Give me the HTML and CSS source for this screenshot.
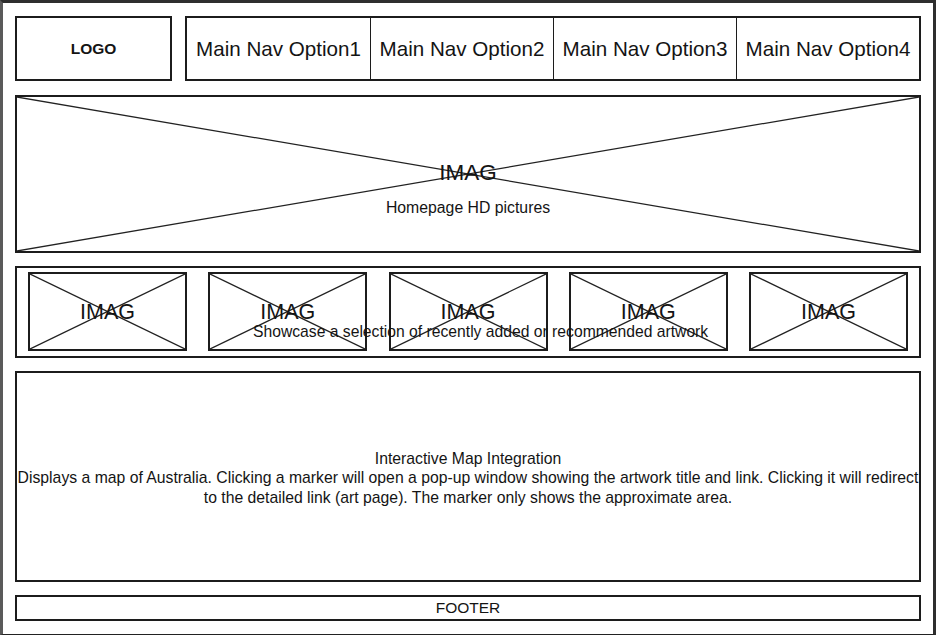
FILE: index.html
```html
<!DOCTYPE html>
<html lang="en">
<head>
<meta charset="utf-8">
<title>Wireframe</title>
<link rel="stylesheet" href="styles.css">
</head>
<body>
<div class="frame">
  <header class="header">
    <div class="logo">LOGO</div>
    <nav class="nav">
      <div class="nav-item">Main Nav Option1</div>
      <div class="nav-item">Main Nav Option2</div>
      <div class="nav-item">Main Nav Option3</div>
      <div class="nav-item">Main Nav Option4</div>
    </nav>
  </header>

  <section class="hero">
    <svg class="cross" viewBox="0 0 100 100" preserveAspectRatio="none"><line x1="0" y1="0" x2="100" y2="100"/><line x1="100" y1="0" x2="0" y2="100"/></svg>
    <div class="hero-text">
      <div class="imag">IMAG</div>
      <div class="caption">Homepage HD pictures</div>
    </div>
  </section>

  <section class="strip">
    <div class="thumb"><svg class="cross" viewBox="0 0 100 100" preserveAspectRatio="none"><line x1="0" y1="0" x2="100" y2="100"/><line x1="100" y1="0" x2="0" y2="100"/></svg><span class="imag small">IMAG</span></div>
    <div class="thumb"><svg class="cross" viewBox="0 0 100 100" preserveAspectRatio="none"><line x1="0" y1="0" x2="100" y2="100"/><line x1="100" y1="0" x2="0" y2="100"/></svg><span class="imag small">IMAG</span></div>
    <div class="thumb"><svg class="cross" viewBox="0 0 100 100" preserveAspectRatio="none"><line x1="0" y1="0" x2="100" y2="100"/><line x1="100" y1="0" x2="0" y2="100"/></svg><span class="imag small">IMAG</span></div>
    <div class="thumb"><svg class="cross" viewBox="0 0 100 100" preserveAspectRatio="none"><line x1="0" y1="0" x2="100" y2="100"/><line x1="100" y1="0" x2="0" y2="100"/></svg><span class="imag small">IMAG</span></div>
    <div class="thumb"><svg class="cross" viewBox="0 0 100 100" preserveAspectRatio="none"><line x1="0" y1="0" x2="100" y2="100"/><line x1="100" y1="0" x2="0" y2="100"/></svg><span class="imag small">IMAG</span></div>
    <div class="strip-label">Showcase a selection of recently added or recommended artwork</div>
  </section>

  <section class="map">
    <div class="map-line">Interactive Map Integration</div>
    <div class="map-line">Displays a map of Australia. Clicking a marker will open a pop-up window showing the artwork title and link. Clicking it will redirect</div>
    <div class="map-line">to the detailed link (art page). The marker only shows the approximate area.</div>
  </section>

  <footer class="footer">FOOTER</footer>
</div>
</body>
</html>
```

FILE: styles.css
```css
html, body {
  margin: 0;
  padding: 0;
  background: #ffffff;
}

body {
  font-family: "Liberation Sans", Arial, sans-serif;
  color: #141414;
}

.frame {
  box-sizing: border-box;
  width: 936px;
  height: 635px;
  border-top: 3px solid #2e2e2e;
  border-left: 3px solid #5a5a5a;
  border-right: 3px solid #2e2e2e;
  border-bottom: 1px solid #222;
  padding: 13px 12px 0 12px;
  display: flex;
  flex-direction: column;
  gap: 13px;
}

.header {
  display: flex;
  gap: 13px;
  height: 65px;
  flex: none;
  margin-bottom: 1px;
}

.logo {
  box-sizing: border-box;
  width: 157px;
  border: 2px solid #1c1c1c;
  display: flex;
  align-items: center;
  justify-content: center;
  font-weight: bold;
  font-size: 15.5px;
}

.nav {
  box-sizing: border-box;
  flex: 1;
  display: grid;
  grid-template-columns: repeat(4, 1fr);
  border: 2px solid #1c1c1c;
}

.nav-item {
  display: flex;
  align-items: center;
  justify-content: center;
  font-size: 20.6px;
  white-space: nowrap;
  border-left: 1px solid #1c1c1c;
}

.nav-item:first-child {
  border-left: none;
}

.cross {
  position: absolute;
  inset: 0;
  width: 100%;
  height: 100%;
}

.cross line {
  stroke: #222;
  stroke-width: 1.3;
  vector-effect: non-scaling-stroke;
}

.hero {
  position: relative;
  box-sizing: border-box;
  height: 158px;
  flex: none;
  border: 2px solid #1c1c1c;
  display: flex;
  align-items: center;
  justify-content: center;
}

.hero-text {
  position: relative;
  text-align: center;
  padding-top: 29px;
}

.imag {
  font-size: 22.5px;
  line-height: 26px;
}

.imag.small {
  font-size: 21.5px;
  position: relative;
}

.caption {
  font-size: 15.8px;
  line-height: 18px;
  margin-top: 13px;
}

.strip {
  position: relative;
  box-sizing: border-box;
  height: 92px;
  flex: none;
  border: 2px solid #1c1c1c;
  padding: 4px 11px 5px 11px;
  display: flex;
  justify-content: space-between;
  align-items: stretch;
}

.thumb {
  position: relative;
  box-sizing: border-box;
  width: 159px;
  border: 2px solid #1c1c1c;
  display: flex;
  align-items: center;
  justify-content: center;
}

.strip-label {
  position: absolute;
  left: 236px;
  top: 55px;
  font-size: 15.7px;
  line-height: 18px;
  white-space: nowrap;
}

.map {
  box-sizing: border-box;
  height: 211px;
  flex: none;
  border: 2px solid #1c1c1c;
  display: flex;
  flex-direction: column;
  align-items: center;
  justify-content: center;
  padding-top: 3px;
}

.map-line {
  font-size: 15.75px;
  line-height: 19.5px;
  white-space: nowrap;
  text-align: center;
}

.footer {
  box-sizing: border-box;
  height: 26px;
  flex: none;
  border: 2px solid #1c1c1c;
  display: flex;
  align-items: center;
  justify-content: center;
  font-size: 15.5px;
}
```
